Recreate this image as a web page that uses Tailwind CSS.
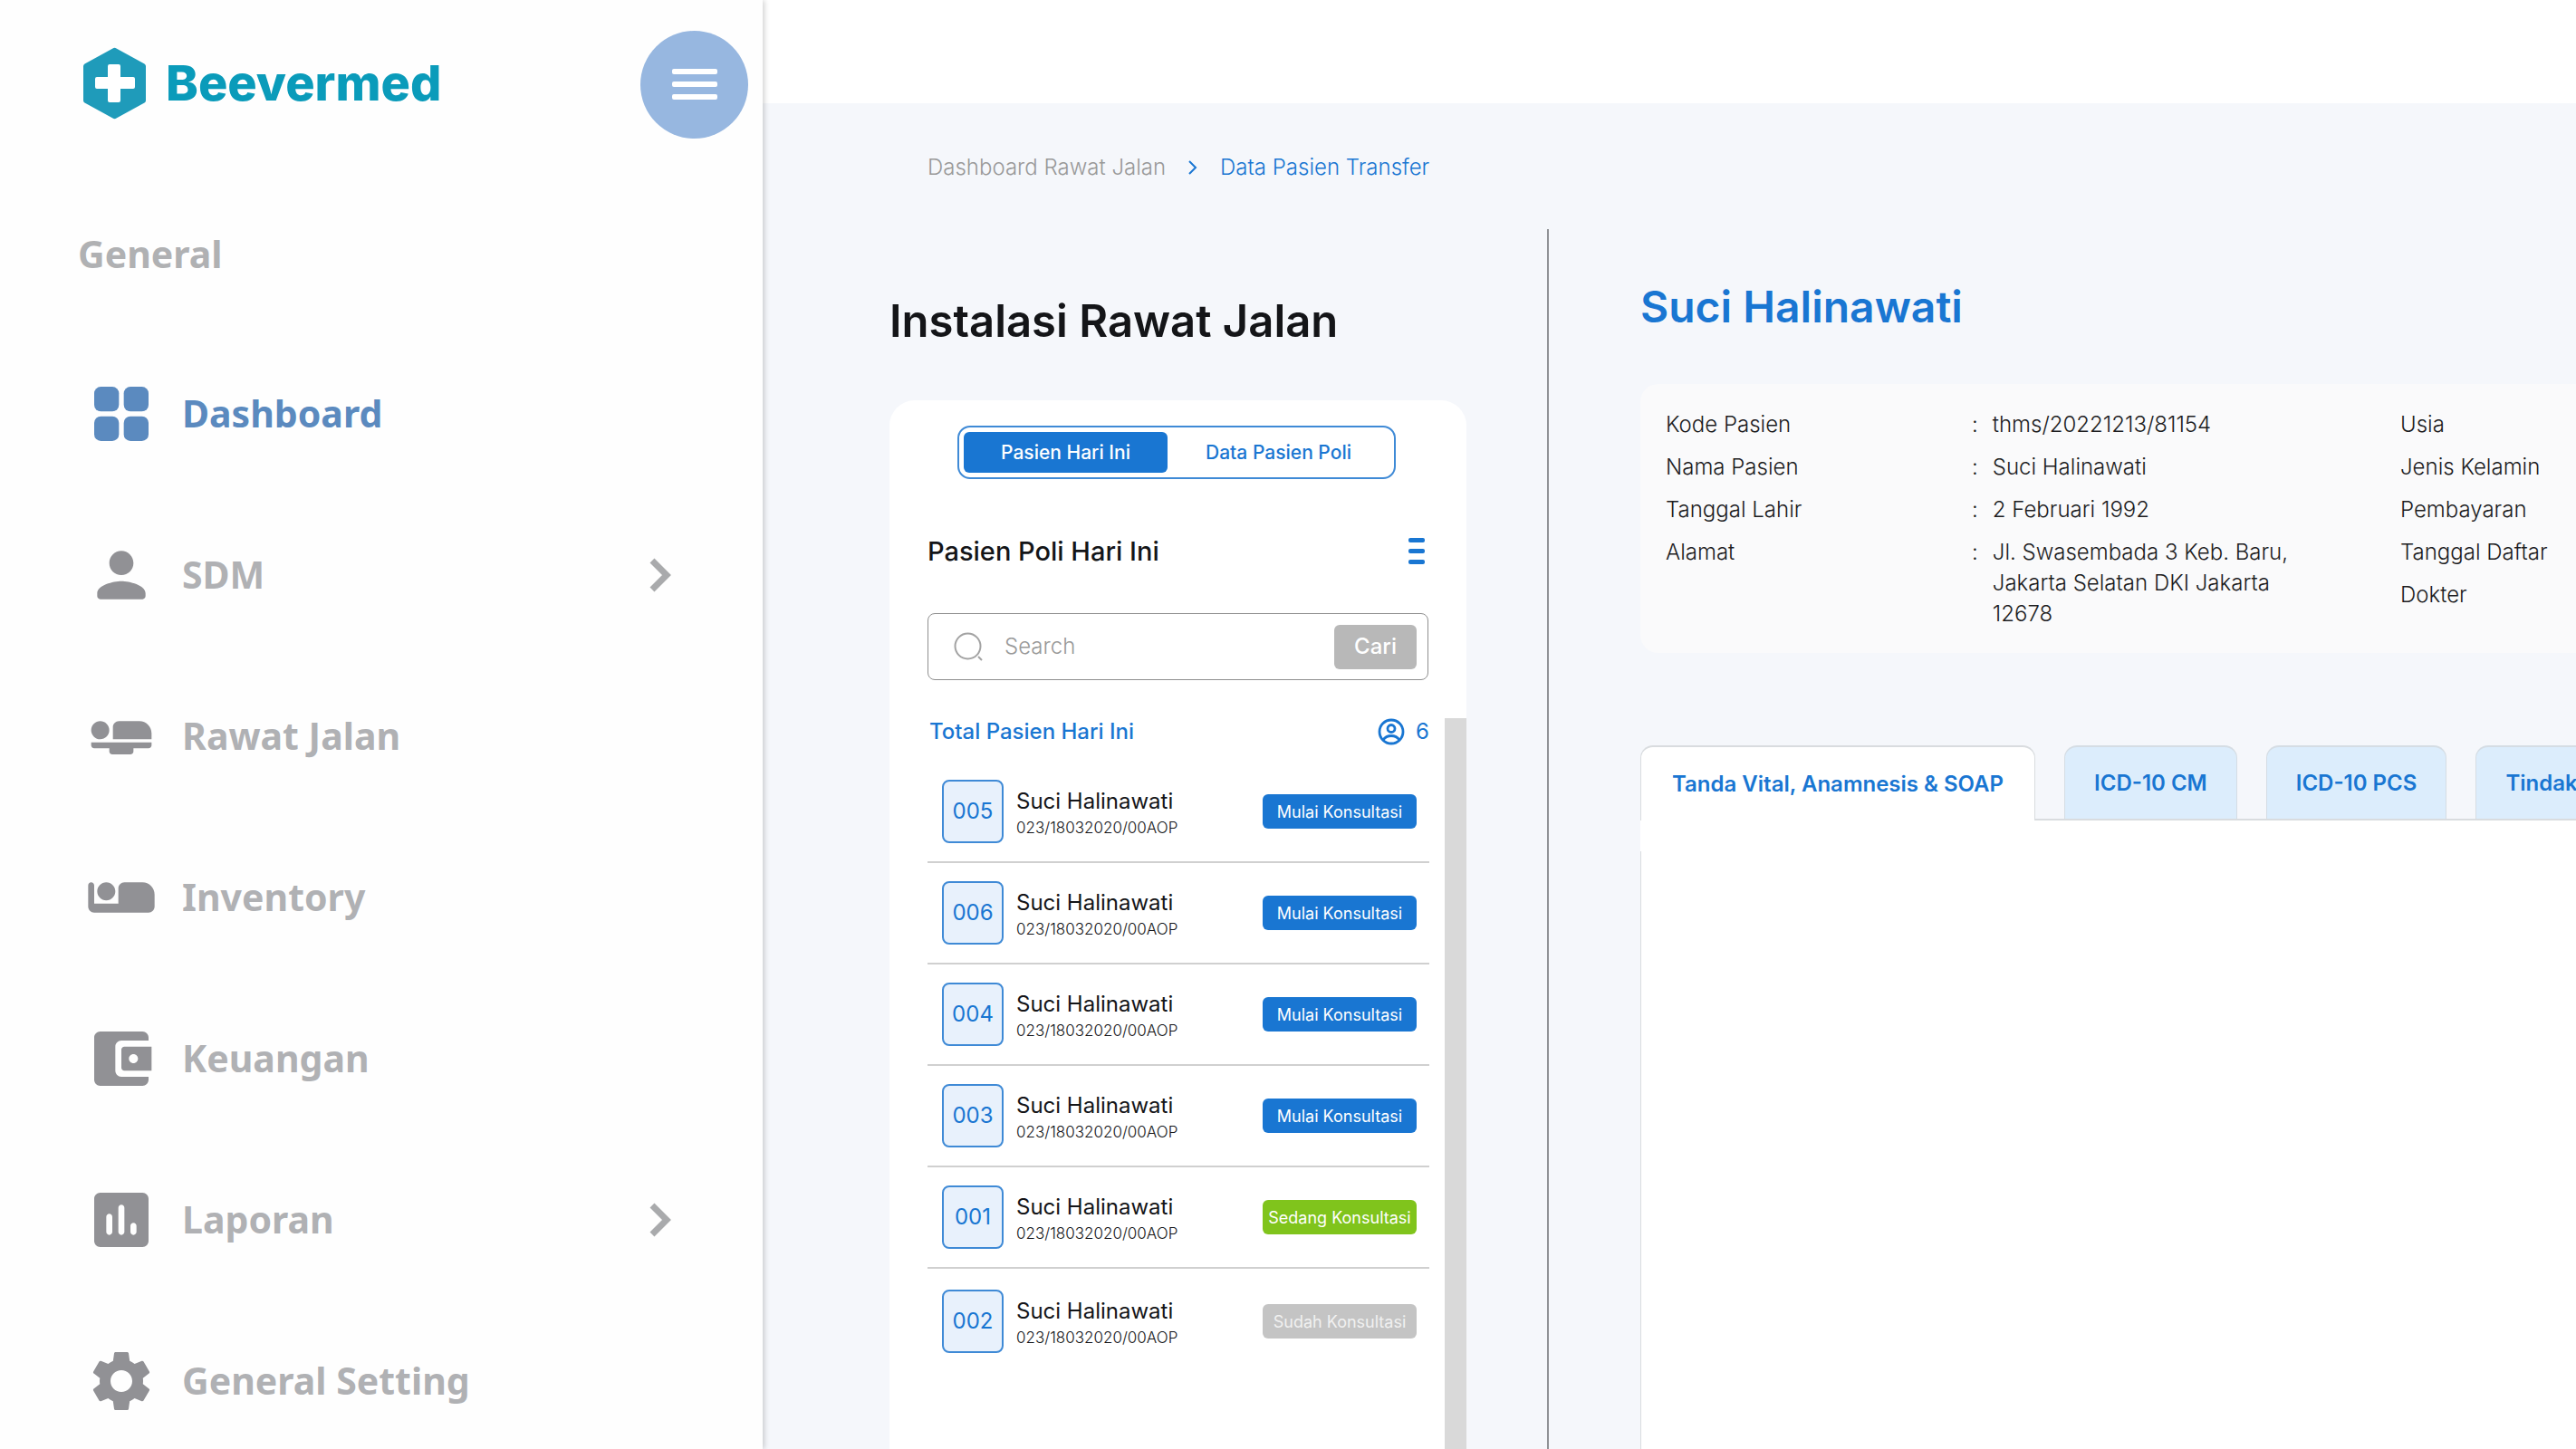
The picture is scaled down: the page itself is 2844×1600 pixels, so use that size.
<!DOCTYPE html>
<html lang="id">
<head>
<meta charset="utf-8">
<meta name="viewport" content="width=device-width, initial-scale=1">
<title>Beevermed - Data Pasien Transfer</title>
<script src="https://cdn.jsdelivr.net/npm/@tailwindcss/browser@4"></script>
</head>
<body class="flex min-h-screen overflow-x-hidden bg-[#f5f7fb] font-['Inter',sans-serif] text-[#141518]">

<!-- Sidebar -->
<aside class="z-10 w-[842px] shrink-0 bg-[#fefefe] shadow-[2px_0_6px_rgba(0,0,0,0.18)]">
  <div class="flex h-[186px] items-center justify-between pl-[92px] pr-4">
    <a href="#" class="flex items-center gap-[22px] pb-[2px] text-[54px] leading-none font-extrabold text-[#0a9bba]">
      <svg class="h-20 w-[69px]" viewBox="0 0 69 80" aria-hidden="true"><path d="M32.500 1.500q2-1.500 4 0L67.500 18.500q1.500 1 1.500 2.500v38q0 1.500-1.500 2.500L36.500 78.500q-2 1.500-4 0L1.500 61.500Q0 60.500 0 59V21q0-1.500 1.500-2.500z" fill="#1f9bba"/><path d="M27 21q0-2 2-2h10q2 0 2 2v12h14q2 0 2 2v9q0 2-2 2H41v13q0 2-2 2H29q-2 0-2-2V46H15q-2 0-2-2v-9q0-2 2-2h12z" fill="#fff"/></svg>
      Beevermed
    </a>
    <button type="button" aria-label="Menu" class="flex size-[119px] items-center justify-center rounded-full bg-[#97b7e0]">
      <svg class="h-[34px] w-[50px]" viewBox="0 0 50 34" fill="#fff" aria-hidden="true"><rect width="50" height="6" rx="2"/><rect y="14" width="50" height="6" rx="2"/><rect y="28" width="50" height="6" rx="2"/></svg>
    </button>
  </div>
  <h2 class="mt-16 pl-[86px] font-['Noto_Sans',sans-serif] text-[41px] leading-[60px] font-bold text-[#b0b1b3]">General</h2>
  <nav class="mt-[107px] flex flex-col gap-[98px] pl-[94px] pr-[100px] font-['Noto_Sans',sans-serif] text-[41px] font-bold text-[#b0b1b4]">
    <a href="#" class="flex h-20 items-center gap-[27px] text-[#5b8abf]">
      <svg class="size-20" viewBox="0 0 24 24" fill="#5b8abf" aria-hidden="true"><rect x="3" y="3" width="8.200" height="8.200" rx="2.200"/><rect x="12.800" y="3" width="8.200" height="8.200" rx="2.200"/><rect x="3" y="12.800" width="8.200" height="8.200" rx="2.200"/><rect x="12.800" y="12.800" width="8.200" height="8.200" rx="2.200"/></svg>
      Dashboard
    </a>
    <a href="#" class="flex h-20 items-center gap-[27px]">
      <svg class="size-20" viewBox="0 0 24 24" fill="#919195" aria-hidden="true"><path d="M12 12c2.210 0 4-1.790 4-4s-1.790-4-4-4-4 1.790-4 4 1.790 4 4 4zm0 2c-2.670 0-8 1.340-8 4v1c0 .550.450 1 1 1h14c.550 0 1-.450 1-1v-1c0-2.660-5.330-4-8-4z"/></svg>
      <span class="flex-1">SDM</span>
      <svg class="h-10 w-[26px]" viewBox="0 0 26 40" fill="none" stroke="#a9aaac" stroke-width="7" aria-hidden="true"><path d="M4 4l16 16L4 36"/></svg>
    </a>
    <a href="#" class="flex h-20 items-center gap-[27px]">
      <svg class="size-20" viewBox="0 0 24 24" fill="#919195" aria-hidden="true"><path d="M22 11v2H9.200V9c0-1.100.900-2 2-2H18c2.210 0 4 1.790 4 4zM2 15c0 .550.450 1 1 1h5v1c0 .550.450 1 1 1h6c.550 0 1-.450 1-1v-1h5c.550 0 1-.450 1-1v-1H2zm5.140-2.900c1.160-1.190 1.140-3.080-.040-4.240-1.190-1.160-3.080-1.140-4.240.040-1.160 1.190-1.140 3.080.040 4.240 1.190 1.160 3.080 1.140 4.240-.040z"/></svg>
      Rawat Jalan
    </a>
    <a href="#" class="flex h-20 items-center gap-[27px]">
      <svg class="size-20" viewBox="0 0 24 24" fill="#919195" aria-hidden="true"><path d="M7 13c1.650 0 3-1.350 3-3S8.650 7 7 7s-3 1.350-3 3 1.350 3 3 3zm12-6h-6c-1.100 0-2 .900-2 2v5H3V8c0-.550-.450-1-1-1s-1 .450-1 1v7c0 1.100.900 2 2 2h18c1.100 0 2-.900 2-2v-4c0-2.210-1.790-4-4-4z"/></svg>
      Inventory
    </a>
    <a href="#" class="flex h-20 items-center gap-[27px]">
      <svg class="size-20" viewBox="0 0 24 24" fill="#919195" aria-hidden="true"><path d="M10 16V8c0-1.100.890-2 2-2h9V5c0-1.100-.900-2-2-2H5c-1.110 0-2 .900-2 2v14c0 1.100.890 2 2 2h14c1.100 0 2-.900 2-2v-1h-9c-1.110 0-2-.900-2-2zm3-8c-.550 0-1 .450-1 1v6c0 .550.450 1 1 1h9V8h-9zm3 5.500c-.830 0-1.500-.670-1.500-1.500s.670-1.500 1.500-1.500 1.500.670 1.500 1.500-.670 1.500-1.500 1.500z"/></svg>
      Keuangan
    </a>
    <a href="#" class="flex h-20 items-center gap-[27px]">
      <svg class="size-20" viewBox="0 0 24 24" fill="#919195" aria-hidden="true"><path d="M19 3H5c-1.100 0-2 .900-2 2v14c0 1.100.900 2 2 2h14c1.100 0 2-.900 2-2V5c0-1.100-.900-2-2-2zM8 17c-.550 0-1-.450-1-1v-5c0-.550.450-1 1-1s1 .450 1 1v5c0 .550-.450 1-1 1zm4 0c-.550 0-1-.450-1-1V8c0-.550.450-1 1-1s1 .450 1 1v8c0 .550-.450 1-1 1zm4 0c-.550 0-1-.450-1-1v-2c0-.550.450-1 1-1s1 .450 1 1v2c0 .550-.450 1-1 1z"/></svg>
      <span class="flex-1">Laporan</span>
      <svg class="h-10 w-[26px]" viewBox="0 0 26 40" fill="none" stroke="#a9aaac" stroke-width="7" aria-hidden="true"><path d="M4 4l16 16L4 36"/></svg>
    </a>
    <a href="#" class="flex h-20 items-center gap-[27px]">
      <svg class="size-20" viewBox="0 0 24 24" fill="#919195" aria-hidden="true"><path d="M19.140 12.940c.040-.300.060-.610.060-.940 0-.320-.020-.640-.070-.940l2.030-1.580c.180-.140.230-.410.120-.610l-1.920-3.320c-.120-.220-.370-.290-.590-.220l-2.390.960c-.500-.380-1.030-.700-1.620-.940l-.360-2.540c-.040-.240-.240-.410-.480-.410h-3.840c-.240 0-.430.170-.470.410l-.360 2.540c-.590.240-1.130.570-1.620.940l-2.390-.960c-.220-.080-.470 0-.590.220L2.740 8.870c-.120.210-.080.470.120.610l2.030 1.580c-.050.300-.090.630-.090.940s.020.640.070.940l-2.030 1.580c-.180.140-.230.410-.120.610l1.920 3.320c.120.220.370.290.590.220l2.390-.960c.500.380 1.030.700 1.620.940l.360 2.540c.050.240.240.410.480.410h3.840c.240 0 .440-.170.470-.410l.360-2.540c.590-.240 1.130-.560 1.620-.940l2.390.960c.220.080.470 0 .590-.220l1.920-3.320c.120-.220.070-.470-.120-.610l-2.010-1.580zM12 15.600c-1.980 0-3.600-1.620-3.600-3.600s1.620-3.600 3.600-3.600 3.600 1.620 3.600 3.600-1.620 3.600-3.600 3.600z"/></svg>
      General Setting
    </a>
  </nav>
</aside>

<div class="flex min-w-0 flex-1 flex-col">
  <header class="h-[114px] shrink-0 bg-white"></header>

  <nav aria-label="Breadcrumb" class="flex h-[139px] shrink-0 items-center gap-6 pl-[182px] pt-[2px] text-[24px] font-light">
    <a href="#" class="text-[#999]">Dashboard Rawat Jalan</a>
    <svg class="h-4 w-3" viewBox="0 0 12 16" fill="none" stroke="#1976d2" stroke-width="2" aria-hidden="true"><path d="M2 1l7 7-7 7"/></svg>
    <a href="#" class="text-[#1976d2]">Data Pasien Transfer</a>
  </nav>

  <div class="flex flex-1">
    <!-- Patient queue -->
    <section class="flex w-[868px] shrink-0 flex-col border-r-2 border-[#909296] pl-[140px] pt-[74px]">
      <h1 class="text-[49px] leading-[56px] font-semibold">Instalasi Rawat Jalan</h1>
      <div class="mt-[59px] flex w-[637px] flex-1 flex-col rounded-t-[28px] bg-white">
        <div class="px-[42px] pt-7">
          <div class="ml-[33px] flex h-[59px] w-[484px] items-stretch rounded-[14px] border-2 border-[#3f8ad6] p-[5px] text-[21px] font-medium">
            <button type="button" class="w-[225px] rounded-md bg-[#1976d2] text-white">Pasien Hari Ini</button>
            <button type="button" class="flex-1 text-[#1976d2]">Data Pasien Poli</button>
          </div>
          <div class="mt-[60px] flex items-center justify-between pr-1">
            <h2 class="text-[29px] leading-10 font-medium">Pasien Poli Hari Ini</h2>
            <button type="button" aria-label="Opsi"><svg class="h-[30px] w-[18px]" viewBox="0 0 18 30" fill="#1976d2" aria-hidden="true"><rect width="18" height="5" rx="2"/><rect y="12" width="18" height="5" rx="2"/><rect y="24" width="18" height="5" rx="2"/></svg></button>
          </div>
          <form class="mt-12 flex h-[74px] items-center rounded-lg border border-[#8f8f8f] pl-7 pr-3">
            <svg class="size-8" viewBox="0 0 32 32" fill="none" stroke="#a3a3a3" stroke-width="2" aria-hidden="true"><circle cx="15.500" cy="15.500" r="14"/><path d="M27 27l4 4"/></svg>
            <input type="search" aria-label="Search" placeholder="Search" class="ml-6 min-w-0 flex-1 bg-transparent text-[24px] font-light placeholder:text-[#999]">
            <button type="button" class="h-[49px] w-[91px] rounded-md bg-[#b8b8b8] text-[24px] font-medium text-white">Cari</button>
          </form>
        </div>
        <div class="mt-[42px] flex flex-1">
          <div class="flex-1 pl-[42px] pr-[17px]">
            <div class="flex h-[30px] items-center justify-between pl-[2px] text-[24px] font-medium text-[#1976d2]">
              <h3>Total Pasien Hari Ini</h3>
              <p class="flex items-center gap-3 font-normal">
                <svg class="size-[30px]" viewBox="0 0 30 30" fill="none" stroke="#1976d2" stroke-width="2.800" aria-hidden="true"><circle cx="15" cy="15" r="13"/><circle cx="15" cy="11.500" r="4"/><path d="M6 24c2-3 5.500-4.500 9-4.500s7 1.500 9 4.500"/></svg>
                6
              </p>
            </div>
            <ul id="queue" class="mt-[18px]"></ul>
          </div>
          <div class="w-6 bg-[#d9d9d9]"></div>
        </div>
      </div>
    </section>

    <!-- Patient detail -->
    <section class="flex min-w-0 flex-1 flex-col overflow-hidden pl-[101px] pt-[58px]">
      <h2 class="text-[48px] leading-[56px] font-semibold text-[#1976d2]">Suci Halinawati</h2>
      <div class="mt-[57px] flex h-[297px] shrink-0 rounded-l-[20px] bg-[#fafafb] pl-7 pt-7 text-[24px] leading-[34px] font-light whitespace-nowrap text-[#1d1d1f]">
        <dl class="grid w-[811px] shrink-0 grid-cols-[338px_1fr] content-start gap-y-[13px]">
          <dt>Kode Pasien</dt><dd class="flex gap-4"><span>:</span>thms/20221213/81154</dd>
          <dt>Nama Pasien</dt><dd class="flex gap-4"><span>:</span>Suci Halinawati</dd>
          <dt>Tanggal Lahir</dt><dd class="flex gap-4"><span>:</span>2 Februari 1992</dd>
          <dt>Alamat</dt><dd class="flex gap-4"><span>:</span><span>Jl. Swasembada 3 Keb. Baru,<br>Jakarta Selatan DKI Jakarta<br>12678</span></dd>
        </dl>
        <dl class="grid content-start gap-y-[13px]">
          <dt>Usia</dt><dt>Jenis Kelamin</dt><dt>Pembayaran</dt><dt>Tanggal Daftar</dt><dt>Dokter</dt>
        </dl>
      </div>
      <div class="mt-[102px] flex shrink-0 text-[24px] font-semibold whitespace-nowrap text-[#1976d2]" role="tablist">
        <button type="button" role="tab" aria-selected="true" class="h-[83px] shrink-0 rounded-t-[14px] border-x border-t-2 border-[#d9dcdf] bg-white px-[34px]">Tanda Vital, Anamnesis &amp; SOAP</button>
        <div class="flex flex-1 gap-8 border-b-2 border-[#d9dcdf] pl-8">
          <button type="button" role="tab" class="shrink-0 rounded-t-[14px] border-x border-t-2 border-[#d5dde4] bg-[#dcedfc] px-8">ICD-10 CM</button>
          <button type="button" role="tab" class="shrink-0 rounded-t-[14px] border-x border-t-2 border-[#d5dde4] bg-[#dcedfc] px-8">ICD-10 PCS</button>
          <button type="button" role="tab" class="shrink-0 rounded-t-[14px] border-x border-t-2 border-[#d5dde4] bg-[#dcedfc] px-8">Tindakan</button>
        </div>
      </div>
      <div role="tabpanel" class="flex flex-1 flex-col bg-white pt-[34px]"><div class="flex-1 border-l border-[#d9dcdf]"></div></div>
    </section>
  </div>
</div>

<script>
  const patients = [
    ["005", "Mulai Konsultasi", "bg-[#1976d2] text-white"],
    ["006", "Mulai Konsultasi", "bg-[#1976d2] text-white"],
    ["004", "Mulai Konsultasi", "bg-[#1976d2] text-white"],
    ["003", "Mulai Konsultasi", "bg-[#1976d2] text-white"],
    ["001", "Sedang Konsultasi", "bg-[#80c41c] text-white"],
    ["002", "Sudah Konsultasi", "bg-[#c4c4c4] text-[#f1f1f1]"],
  ];
  document.getElementById("queue").innerHTML = patients.map(([no, status, tone]) => `
    <li class="flex h-[112px] items-center border-b-2 border-[#d0d0d0] pl-4 pr-[14px] last:border-b-0 last:pt-1">
      <span class="flex h-[70px] w-[68px] items-center justify-center rounded-lg border-2 border-[#3f8ad6] bg-[#e8f1fc] text-[24px] text-[#1976d2]">${no}</span>
      <div class="ml-[14px] flex-1 pt-[3px]">
        <p class="text-[24px] leading-[32px]">Suci Halinawati</p>
        <p class="text-[17px] leading-[26px] font-light">023/18032020/00AOP</p>
      </div>
      <button type="button" class="h-[38px] w-[170px] rounded-md text-[18px] whitespace-nowrap ${tone}">${status}</button>
    </li>`).join("");
</script>
</body>
</html>
